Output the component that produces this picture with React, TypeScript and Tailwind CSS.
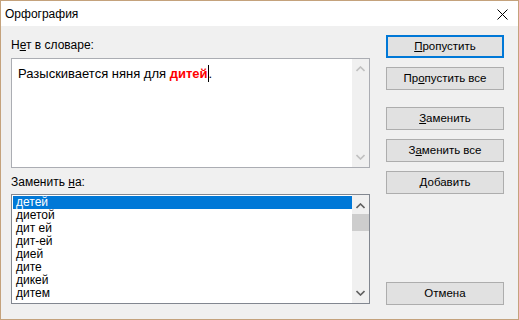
import React from "react";

const suggestions = ["детей", "диетой", "дит ей", "дит-ей", "дией", "дите", "дикей", "дитем"];

const Chevron = ({ up, color }: { up?: boolean; color: string }) => (
    <svg width="9" height="6" viewBox="0 0 9 6">
        <polyline
            points={up ? "0.5,5 4.5,1 8.5,5" : "0.5,1 4.5,5 8.5,1"}
            fill="none"
            stroke={color}
            strokeWidth="1.6"
        />
    </svg>
);

const Btn = ({ children, primary, className }: { children: React.ReactNode; primary?: boolean; className?: string }) => (
    <div
        className={
            "h-[23px] w-[118px] flex items-center justify-center bg-[#e1e1e1] text-[11.5px] text-black leading-none " +
            (primary ? "border-2 border-[#0078d7] " : "border border-[#adadad] ") +
            (className || "")
        }
    >
        {children}
    </div>
);

const App = () => {
    return (
        <div className="w-[519px] h-[320px] flex flex-col border border-[#c4a27c] bg-[#f0f0f0] font-['Liberation_Sans',sans-serif] text-black select-none">
            {/* title bar */}
            <div className="h-[25px] shrink-0 bg-white flex items-center justify-between pl-[4px] pr-[10px]">
                <span className="text-[12px] leading-none">Орфография</span>
                <svg width="11" height="11" viewBox="0 0 11 11" className="mt-[1px]">
                    <path d="M0.5 0.5 L10.5 10.5 M10.5 0.5 L0.5 10.5" stroke="#000" strokeWidth="1" />
                </svg>
            </div>

            <div className="flex-1 flex pl-[10px] pr-[14px] pb-[14px]">
                {/* left */}
                <div className="w-[359px] flex flex-col pt-[12px]">
                    <div className="h-[15px] text-[12px] leading-[15px]">
                        Н<u>е</u>т в словаре:
                    </div>
                    <div className="mt-[5px] h-[110px] border border-[#abadb3] bg-white flex">
                        <div className="flex-1 pl-[6px] pt-[6px] text-[13px] leading-[17px]">
                            Разыскивается няня для <span className="text-[#ff0000] font-bold">дитей</span>
                            <span className="inline-block w-px h-[17px] bg-black align-top"></span>.
                        </div>
                        <div className="w-[17px] bg-[#f0f0f0] flex flex-col items-center justify-between pt-[7px] pb-[7px]">
                            <Chevron up color="#c0c0c0" />
                            <Chevron color="#c0c0c0" />
                        </div>
                    </div>
                    <div className="mt-[7px] h-[15px] text-[12px] leading-[15px]">
                        Заменить <u>н</u>а:
                    </div>
                    <div className="mt-[4px] h-[110px] border border-[#828790] bg-white flex">
                        <div className="flex-1 pt-[1px] pl-[1px]">
                            {suggestions.map((s, i) => (
                                <div
                                    key={s}
                                    className={
                                        "h-[13px] pl-[3px] text-[12px] leading-[13px] " +
                                        (i === 0 ? "bg-[#0078d7] text-white" : "")
                                    }
                                >
                                    {s}
                                </div>
                            ))}
                        </div>
                        <div className="w-[17px] bg-[#f0f0f0] flex flex-col items-center pt-[8px] pb-[7px]">
                            <Chevron up color="#606060" />
                            <div className="mt-[5px] w-[17px] h-[17px] bg-[#cdcdcd]"></div>
                            <div className="flex-1"></div>
                            <Chevron color="#606060" />
                        </div>
                    </div>
                </div>

                {/* right buttons */}
                <div className="ml-[16px] flex flex-col pt-[9px]">
                    <Btn primary>
                        <span><u>П</u>ропустить</span>
                    </Btn>
                    <Btn className="mt-[9px]">
                        <span>Пр<u>о</u>пустить все</span>
                    </Btn>
                    <Btn className="mt-[17px]">
                        <span><u>З</u>аменить</span>
                    </Btn>
                    <Btn className="mt-[9px]">
                        <span>З<u>а</u>менить все</span>
                    </Btn>
                    <Btn className="mt-[9px]">
                        <span><u>Д</u>обавить</span>
                    </Btn>
                    <div className="flex-1"></div>
                    <Btn>Отмена</Btn>
                </div>
            </div>
        </div>
    );
};

export default App;
